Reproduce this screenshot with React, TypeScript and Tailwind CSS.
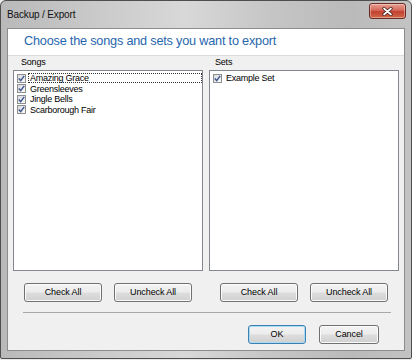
import React from "react";

function Check() {
  return (
    <span className="w-[9px] h-[9px] shrink-0 border border-[#8e8f8f] bg-[linear-gradient(135deg,#d8dbe0,#fafafa)] flex items-center justify-center">
      <svg width="7" height="7" viewBox="0 0 7 7">
        <path d="M0.8 3.6 L2.7 5.6 L6.2 0.9" stroke="#41588f" strokeWidth="1.5" fill="none" />
      </svg>
    </span>
  );
}

function Item({ label, focus }: { label: string; focus?: boolean }) {
  return (
    <div className="flex items-center h-[10.5px] pl-[3px] gap-[2px]">
      <Check />
      <span
        className={
          "flex-1 h-[10px] leading-[9px] pl-[1px] text-[9px] tracking-[-0.25px] text-black whitespace-nowrap " +
          (focus ? "border border-dotted border-[#333]" : "border border-transparent")
        }
      >
        {label}
      </span>
    </div>
  );
}

function Btn({ children, def }: { children: React.ReactNode; def?: boolean }) {
  return (
    <div
      className={
        "h-[19px] rounded-[3px] border flex items-center justify-center text-[9px] tracking-[-0.1px] text-black bg-[linear-gradient(#f3f3f3_0%,#ececec_48%,#dddddd_52%,#d0d0d0_100%)] " +
        (def
          ? "border-[#3c7fb1] shadow-[inset_0_0_0_1px_#a9dbf6]"
          : "border-[#707070] shadow-[inset_0_0_0_1px_#fbfbfb]")
      }
    >
      {children}
    </div>
  );
}

export default function App() {
  return (
    <div className="w-[412px] h-[360px] bg-[#e9e9e9] font-['Liberation_Sans',Arial,sans-serif]">
      <div className="w-[412px] h-[359px] rounded-t-[6px] rounded-b-[2px] border border-[#4e4e4e] bg-[linear-gradient(90deg,#b9b9b9_0%,#cbcbcb_25%,#d8d8d8_45%,#c6c6c6_65%,#bababa_85%,#c3c3c3_100%)] flex flex-col">
        <div className="h-[27px] flex items-start justify-between pl-[6px] pr-[5px]">
          <span className="mt-[8px] text-[10px] leading-[12px] tracking-[-0.15px] text-[#111]">Backup / Export</span>
          <div className="mt-[2px] w-[37px] h-[16px] rounded-[3px] border border-[#6b2a22] bg-[linear-gradient(#e8a093_0%,#d4685a_45%,#c2402f_55%,#d06a4a_100%)] shadow-[inset_0_0_0_1px_rgba(255,255,255,0.35)] flex items-center justify-center">
            <svg width="11" height="9" viewBox="0 0 11 9">
              <path d="M2 1.5 L9 7.5 M9 1.5 L2 7.5" stroke="#3b1a16" strokeWidth="3.2" strokeLinecap="round" />
              <path d="M2 1.5 L9 7.5 M9 1.5 L2 7.5" stroke="#ffffff" strokeWidth="1.7" strokeLinecap="round" />
            </svg>
          </div>
        </div>
        <div className="ml-[6px] mr-[6px] mb-[7px] flex-1 border border-[#8c8c8c] bg-[#f0f0f0] flex flex-col">
          <div className="h-[27px] bg-white border-b border-[#dcdcdc] flex items-center pl-[16px]">
            <span className="text-[12.7px] tracking-[-0.2px] text-[#2766ad]">
              Choose the songs and sets you want to export
            </span>
          </div>
          <div className="grid grid-cols-2 gap-x-[6px] px-[5px]">
            <div className="flex flex-col">
              <div className="h-[14px] pl-[8px] flex items-center text-[9px] tracking-[-0.2px] text-black">Songs</div>
              <div className="h-[201px] bg-white border border-[#828790] pt-[2px]">
                <Item label="Amazing Grace" focus />
                <Item label="Greensleeves" />
                <Item label="Jingle Bells" />
                <Item label="Scarborough Fair" />
              </div>
              <div className="mt-[12px] flex justify-center gap-[12px]">
                <div className="w-[78px]"><Btn>Check All</Btn></div>
                <div className="w-[78px]"><Btn>Uncheck All</Btn></div>
              </div>
            </div>
            <div className="flex flex-col">
              <div className="h-[14px] pl-[6px] flex items-center text-[9px] tracking-[-0.2px] text-black">Sets</div>
              <div className="h-[201px] bg-white border border-[#828790] pt-[2px]">
                <Item label="Example Set" />
              </div>
              <div className="mt-[12px] flex justify-center gap-[12px]">
                <div className="w-[78px]"><Btn>Check All</Btn></div>
                <div className="w-[78px]"><Btn>Uncheck All</Btn></div>
              </div>
            </div>
          </div>
          <div className="mt-[10px] ml-[15px] mr-[13px] h-px bg-[#a8a8a8]" />
          <div className="mt-[12px] flex justify-end gap-[13px] mr-[25px]">
            <div className="w-[58px]"><Btn def>OK</Btn></div>
            <div className="w-[60px]"><Btn>Cancel</Btn></div>
          </div>
        </div>
      </div>
    </div>
  );
}
